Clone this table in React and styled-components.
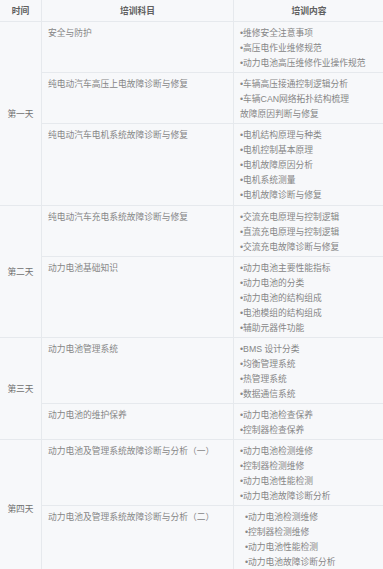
import React from "react";
import styled, { createGlobalStyle } from "styled-components";

const days = [
  {
    day: "第一天",
    rows: [
      {
        subject: "安全与防护",
        height: 50,
        items: ["•维修安全注意事项", "•高压电作业维修规范", "•动力电池高压维修作业操作规范"],
      },
      {
        subject: "纯电动汽车高压上电故障诊断与修复",
        height: 50,
        items: ["•车辆高压接通控制逻辑分析", "•车辆CAN网络拓扑结构梳理", "故障原因判断与修复"],
      },
      {
        subject: "纯电动汽车电机系统故障诊断与修复",
        height: 81,
        items: [
          "•电机结构原理与种类",
          "•电机控制基本原理",
          "•电机故障原因分析",
          "•电机系统测量",
          "•电机故障诊断与修复",
        ],
      },
    ],
  },
  {
    day: "第二天",
    rows: [
      {
        subject: "纯电动汽车充电系统故障诊断与修复",
        height: 50,
        items: ["•交流充电原理与控制逻辑", "•直流充电原理与控制逻辑", "•交流充电故障诊断与修复"],
      },
      {
        subject: "动力电池基础知识",
        height: 80,
        items: [
          "•动力电池主要性能指标",
          "•动力电池的分类",
          "•动力电池的结构组成",
          "•电池模组的结构组成",
          "•辅助元器件功能",
        ],
      },
    ],
  },
  {
    day: "第三天",
    rows: [
      {
        subject: "动力电池管理系统",
        height: 65,
        items: ["•BMS 设计分类", "•均衡管理系统", "•热管理系统", "•数据通信系统"],
      },
      {
        subject: "动力电池的维护保养",
        height: 35,
        items: ["•动力电池检查保养", "•控制器检查保养"],
      },
    ],
  },
  {
    day: "第四天",
    rows: [
      {
        subject: "动力电池及管理系统故障诊断与分析（一）",
        height: 65,
        items: ["•动力电池检测维修", "•控制器检测维修", "•动力电池性能检测", "•动力电池故障诊断分析"],
      },
      {
        subject: "动力电池及管理系统故障诊断与分析（二）",
        height: 70,
        indent: true,
        items: ["•动力电池检测维修", "•控制器检测维修", "•动力电池性能检测", "•动力电池故障诊断分析"],
      },
    ],
  },
];

const GlobalStyle = createGlobalStyle`
  html, body {
    margin: 0;
    padding: 0;
    background: #f7f8fa;
  }
  body {
    font-family: "Liberation Sans", "Noto Sans CJK SC", sans-serif;
  }
`;

const App = () => {
  const rowHeights = [21, ...days.flatMap((d) => d.rows.map((r) => r.height))];

  return (
    <>
      <GlobalStyle />
      <Table style={{ gridTemplateRows: rowHeights.map((h) => `${h}px`).join(" ") }}>
        <HeadCell>时间</HeadCell>
        <HeadCell>培训科目</HeadCell>
        <HeadCell>培训内容</HeadCell>
        {days.map((d) => (
          <React.Fragment key={d.day}>
            <DayCell $span={d.rows.length}>{d.day}</DayCell>
            {d.rows.map((r) => (
              <React.Fragment key={r.subject}>
                <SubjectCell>{r.subject}</SubjectCell>
                <ContentCell $indent={r.indent}>
                  {r.items.map((item) => (
                    <Item key={item}>{item}</Item>
                  ))}
                </ContentCell>
              </React.Fragment>
            ))}
          </React.Fragment>
        ))}
      </Table>
    </>
  );
};

const Table = styled.div`
  display: grid;
  grid-template-columns: 41px 191px 1fr;
  gap: 1px;
  width: 384px;
  background-color: #e6e9ed;
  font-size: 8.75px;
  line-height: 15px;
  color: #868686;
`;

const Cell = styled.div`
  background-color: #f7f8fa;
  box-sizing: border-box;
  overflow: hidden;
`;

const HeadCell = styled(Cell)`
  display: flex;
  align-items: center;
  justify-content: center;
  padding-top: 2px;
  font-weight: bold;
  color: #606060;
`;

const DayCell = styled(Cell)`
  grid-row: span ${(p) => p.$span};
  display: flex;
  align-items: center;
  justify-content: center;
  padding-top: 2px;
  color: #707070;
`;

const SubjectCell = styled(Cell)`
  padding: 4px 6px;
`;

const ContentCell = styled(Cell)`
  display: flex;
  flex-direction: column;
  padding: 4px 6px 4px ${(p) => (p.$indent ? "11px" : "6px")};
`;

const Item = styled.div`
  white-space: nowrap;
`;

export default App;
